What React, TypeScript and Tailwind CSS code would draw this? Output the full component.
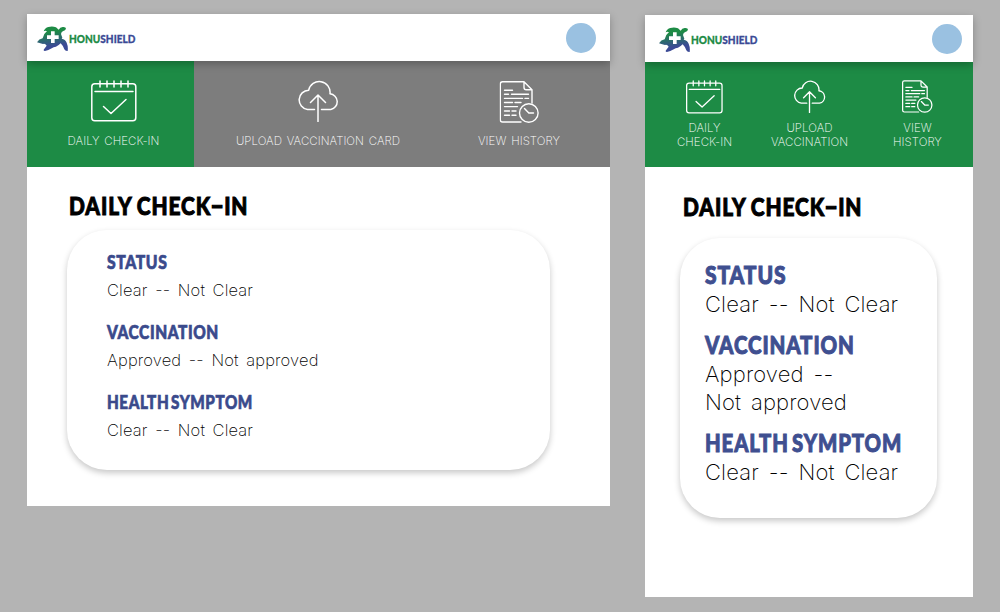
import React from "react";

const heavy = "font-['Lato','Liberation_Sans',sans-serif] font-black whitespace-nowrap origin-left";
const thin = "font-['Inter','Liberation_Sans',sans-serif] whitespace-nowrap";

function Turtle({ id }: { id: string }) {
  return (
    <svg width="32" height="26" viewBox="0 0 96 78" className="shrink-0">
      <defs>
        <linearGradient id={id} x1="0.45" y1="0.1" x2="0.6" y2="0.9">
          <stop offset="0.15" stopColor="#1d8b45" />
          <stop offset="0.85" stopColor="#3b4a95" />
        </linearGradient>
      </defs>
      <path
        fill={`url(#${id})`}
        d="M20 16 Q24 5 34 3 Q46 -1 57 4 L65 11 Q69 4 77 3 Q87 2 87 8 Q85 13 79 15 Q73 17 72 24 L76 35 L74 38 Q85 39 89 50 Q94 62 92 75 Q85 76 82 70 Q79 60 71 52 L65 57 Q56 64 50 64 Q37 72 24 75 Q18 75 21 70 Q25 64 29 59 Q24 51 18 54 L10 52 Q5 50 0 49 Q6 39 17 37 L22 24 Q26 20 30 16 Q25 13 20 16 Z"
      />
      <path fill="#fff" d="M42 16h11v12h12v11h-12v12h-11v-12h-12v-11h12z" />
    </svg>
  );
}

function Header({ id, pad }: { id: string; pad: string }) {
  return (
    <header className={`relative z-10 flex h-[47px] shrink-0 items-center justify-between bg-white shadow-[0_3px_8px_rgba(0,0,0,0.26)] ${pad}`}>
      <div className="flex items-center pt-[3px]">
        <Turtle id={id} />
        <span className="-mt-px origin-left scale-x-[0.84] font-['Lato','Liberation_Sans',sans-serif] text-[12px] leading-4 font-black text-[#1d8b45] [-webkit-text-stroke:0.3px]">
          HONU<span className="text-[#3b4a95]">SHIELD</span>
        </span>
      </div>
      <div className="size-[30px] rounded-full bg-[#9ac1e1]" />
    </header>
  );
}

function Title({ place }: { place: string }) {
  return (
    <h1 className={`${heavy} ${place} scale-x-[0.835] text-[25px] leading-8 tracking-[1.1px] text-black [-webkit-text-stroke:1px] [word-spacing:-1px]`}>
      DAILY CHECK<span className="mr-[2px] ml-[3px] inline-block -translate-y-px scale-x-[1.7]">-</span>IN
    </h1>
  );
}

const stroke = { fill: "none", stroke: "#fff", strokeLinecap: "round", strokeLinejoin: "round" } as const;

function CalendarIcon({ className, sw }: { className: string; sw: number }) {
  return (
    <svg viewBox="0 0 46 42" className={className} {...stroke} strokeWidth={sw}>
      <rect x="0.8" y="3.8" width="44" height="37" rx="3" />
      <path d="M4 11.5h38M9 1v6M16 1v6M23 1v6M30 1v6M37 1v6M12.5 26.5l7.5 7L35 19.500" />
    </svg>
  );
}

function CloudIcon({ className, sw }: { className: string; sw: number }) {
  return (
    <svg viewBox="0 0 42 42" className={className} {...stroke} strokeWidth={sw}>
      <path d="M17.500 29.500h-7a9.700 9.700 0 0 1 1.200-19.300A10.800 10.800 0 0 1 33 13.700a8 8 0 0 1 .8 15.800H24.500M21 41.500V15M13.500 22.500l7.500-7.500 7.500 7.500" />
    </svg>
  );
}

function HistoryIcon({ className, sw }: { className: string; sw: number }) {
  return (
    <svg viewBox="0 0 40 42" className={className} {...stroke} strokeWidth={sw}>
      <path d="M21.500 41H3a2.200 2.200 0 0 1-2.200-2.200V3A2.200 2.200 0 0 1 3 .8h21.500l8 8V22M24.500 1v5.500q0 2.300 2.300 2.300h5.500" />
      <path d="M5 9.200h8M5 13.300h4M12 13.300h17M5 17.400h18M25.500 17.400h3.500M5 21.500h8M15.500 21.500h6M5 25.600h13M5 30h5M12.500 30h4M5 34.200h5M12.500 34.200h4" />
      <circle cx="29.300" cy="32" r="9.300" />
      <path d="M25 27.500l4.300 4.500h4.700" />
    </svg>
  );
}

type Item = { title: string; lines: string[]; fit: string };

const narrowItems: Item[] = [
  { title: "STATUS", lines: ["Clear -- Not Clear"], fit: "scale-x-[0.84]" },
  { title: "VACCINATION", lines: ["Approved --", "Not approved"], fit: "scale-x-[0.82]" },
  { title: "HEALTH SYMPTOM", lines: ["Clear -- Not Clear"], fit: "scale-x-[0.812] [word-spacing:-3px]" },
];

const wideItems: Item[] = [
  { title: "STATUS", lines: ["Clear -- Not Clear"], fit: "scale-x-[0.85]" },
  { title: "VACCINATION", lines: ["Approved -- Not approved"], fit: "scale-x-[0.835]" },
  { title: "HEALTH SYMPTOM", lines: ["Clear -- Not Clear"], fit: "scale-x-[0.823] [word-spacing:-3px]" },
];

function WideSection({ title, lines, fit }: Item) {
  return (
    <section className="h-[70px]">
      <h3 className={`${heavy} ${fit} text-[18.5px] leading-6 tracking-[0.7px] text-[#3a4a8c] [-webkit-text-stroke:0.7px]`}>{title}</h3>
      {lines.map((l) => (
        <p key={l} className={`${thin} mt-[4px] text-[16.500px] leading-6 font-[170] tracking-[0.15px] text-black [word-spacing:2.8px]`}>{l}</p>
      ))}
    </section>
  );
}

function NarrowSection({ title, lines, fit }: Item) {
  return (
    <section className="mb-[13px]">
      <h3 className={`${heavy} ${fit} text-[25px] leading-[29px] tracking-[1.1px] text-[#3f4f90] [-webkit-text-stroke:1px]`}>{title}</h3>
      {lines.map((l) => (
        <p key={l} className={`${thin} relative top-px text-[22px] leading-[28px] font-[160] tracking-[0.15px] text-black [word-spacing:3.5px]`}>{l}</p>
      ))}
    </section>
  );
}

export default function App() {
  const label = `${thin} text-center text-white text-[11.5px] font-[180] tracking-[0.05px] [word-spacing:1.5px]`;
  return (
    <div className="flex h-[612px] w-[1000px] items-start overflow-hidden bg-[#b4b4b4] pl-[27px]">
      <main className="mt-[14px] flex h-[492px] w-[583px] flex-col bg-white">
        <Header id="shellWide" pad="pl-[10px] pr-[14px]" />
        <nav className="flex h-[106px] shrink-0 bg-[#7d7d7d]">
          <div className="flex w-[167px] flex-col items-center bg-[#1d8b45] pt-[19px] pl-[6px]">
            <CalendarIcon className="h-[42px] w-[46px]" sw={1.5} />
            <span className={`${label} mt-[11px] leading-4`}>DAILY CHECK-IN</span>
          </div>
          <div className="flex w-[248px] flex-col items-center pt-[19px]">
            <CloudIcon className="h-[42px] w-[42px]" sw={1.5} />
            <span className={`${label} mt-[11px] leading-4`}>UPLOAD VACCINATION CARD</span>
          </div>
          <div className="flex w-[154px] flex-col items-center pt-[20px]">
            <HistoryIcon className="h-[42px] w-[40px] translate-x-[0.5px]" sw={1.4} />
            <span className={`${label} mt-[10px] leading-4`}>VIEW HISTORY</span>
          </div>
        </nav>
        <Title place="mt-[22px] ml-[42px]" />
        <div className="mt-[9px] ml-[40px] h-[240px] w-[483px] rounded-[40px] bg-white pt-[20px] pl-[40px] shadow-[0_3px_6px_rgba(0,0,0,0.22)]">
          {wideItems.map((i) => (
            <WideSection key={i.title} {...i} />
          ))}
        </div>
      </main>
      <main className="mt-[15px] ml-[35px] flex h-[582px] w-[328px] flex-col bg-white">
        <Header id="shellNarrow" pad="pl-[14px] pr-[11px]" />
        <nav className="flex h-[105px] shrink-0 bg-[#1d8b45] pl-[10px]">
          <div className="flex w-[99px] flex-col items-center pt-[18px]">
            <CalendarIcon className="h-[34px] w-[37px]" sw={1.6} />
            <span className={`${label} mt-[7px] leading-[14px]`}>DAILY<br />CHECK-IN</span>
          </div>
          <div className="flex w-[111px] flex-col items-center pt-[18px]">
            <CloudIcon className="h-[33px] w-[33px]" sw={1.7} />
            <span className={`${label} mt-[8px] leading-[14px]`}>UPLOAD<br />VACCINATION</span>
          </div>
          <div className="flex w-[105px] flex-col items-center pt-[18px]">
            <HistoryIcon className="h-[33px] w-[31px]" sw={1.6} />
            <span className={`${label} mt-[8px] leading-[14px]`}>VIEW<br />HISTORY</span>
          </div>
        </nav>
        <Title place="mt-[23px] ml-[38px]" />
        <div className="mt-[16px] ml-[35px] h-[280px] w-[257px] rounded-[40px] bg-white pt-[22px] pl-[25px] shadow-[0_3px_6px_rgba(0,0,0,0.22)]">
          {narrowItems.map((i) => (
            <NarrowSection key={i.title} {...i} />
          ))}
        </div>
      </main>
    </div>
  );
}
